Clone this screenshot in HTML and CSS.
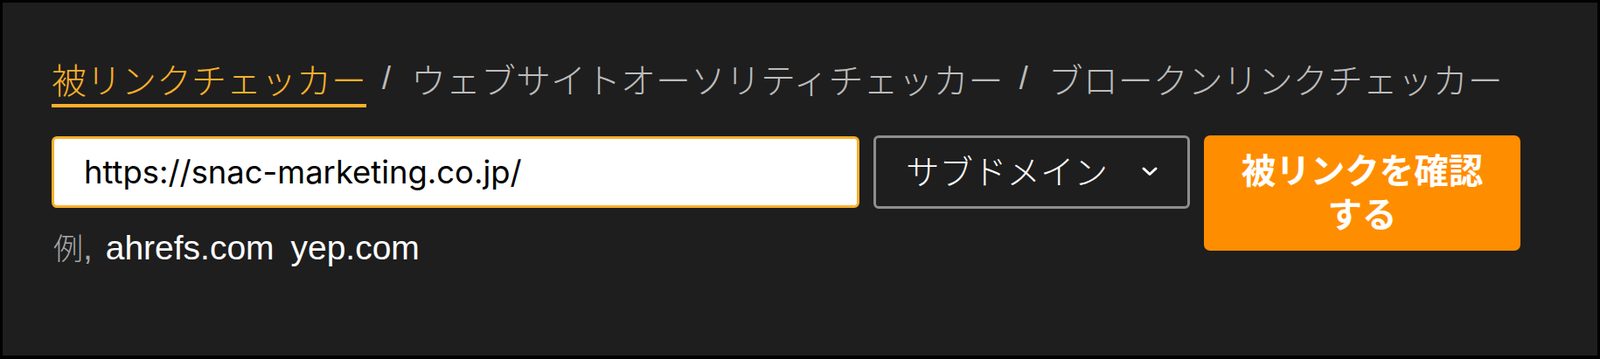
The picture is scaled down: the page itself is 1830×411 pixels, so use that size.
FILE: index.html
```html
<!DOCTYPE html>
<html lang="ja">
<head>
<meta charset="utf-8">
<title>被リンクチェッカー</title>
<link rel="stylesheet" href="styles.css">
</head>
<body>
<div class="frame">
  <section class="panel">
    <nav class="tabs">
      <a class="tab tab-active">被リンクチェッカー</a>
      <span class="sep">/</span>
      <a class="tab">ウェブサイトオーソリティチェッカー</a>
      <span class="sep">/</span>
      <a class="tab">ブロークンリンクチェッカー</a>
    </nav>
    <form class="form-row">
      <div class="field-col">
        <div class="url-box">
          <input class="url-input" type="text" value="https://snac-marketing.co.jp/">
        </div>
        <p class="examples"><span class="ex-label">例</span><span class="ex-comma">,</span> <span class="ex-link">ahrefs.com</span> <span class="ex-link">yep.com</span></p>
      </div>
      <div class="select-box">
        <span class="select-text">サブドメイン</span>
        <svg class="chevron" width="20" height="12" viewBox="0 0 20 12" aria-hidden="true">
          <polyline points="3,3 10,9.5 17,3" fill="none" stroke="#ffffff" stroke-width="3" stroke-linecap="round" stroke-linejoin="round"/>
        </svg>
      </div>
      <button class="submit-btn" type="button">被リンクを確認する</button>
    </form>
  </section>
</div>
</body>
</html>
```

FILE: styles.css
```css
* { box-sizing: border-box; }

html, body {
  margin: 0;
  padding: 0;
  background: #000000;
}

.frame {
  width: 1830px;
  height: 411px;
  padding: 3px 3px 4px 3px;
  background: #000000;
}

.panel {
  height: 100%;
  background: #1e1e1e;
  padding: 67px 0 0 56px;
  font-family: "Noto Sans CJK JP", "Liberation Sans", sans-serif;
}

.tabs {
  display: flex;
  align-items: flex-start;
  font-size: 40px;
  line-height: 40px;
  font-weight: 300;
  white-space: nowrap;
}

.tab {
  color: #bcbcbc;
  display: block;
}

.tab-active {
  color: #fbb02a;
  padding: 0 0 9px 0;
  border-bottom: 4px solid #fbb02a;
}

.sep {
  font-family: "Liberation Sans", sans-serif;
  font-size: 36px;
  line-height: 40px;
  color: #bcbcbc;
  margin: 0 23px 0 18px;
}

.form-row {
  display: flex;
  align-items: flex-start;
  gap: 16px;
  margin: 32px 0 0 0;
}

.field-col {
  width: 924px;
}

.url-box {
  height: 82px;
  border: 3px solid #fbb02a;
  border-radius: 6px;
  background: #ffffff;
  display: flex;
  align-items: center;
  margin-top: 1px;
}

.url-input {
  width: 100%;
  border: 0;
  outline: none;
  background: transparent;
  padding: 0 0 0 34px;
  font-family: "Inter", "Liberation Sans", sans-serif;
  font-size: 36.4px;
  color: #000000;
}

.examples {
  margin: 24px 0 0 0;
  font-family: "Liberation Sans", sans-serif;
  font-size: 39px;
  line-height: 44px;
  height: 44px;
  color: #ffffff;
}

.ex-label {
  font-family: "Noto Sans CJK JP", sans-serif;
  font-weight: 300;
  font-size: 34px;
  line-height: 1px;
  color: #a8a8a8;
  margin-left: 2px;
}

.ex-comma {
  color: #a8a8a8;
  margin-right: 4px;
}

.ex-link {
  margin-right: 8px;
}

.select-box {
  width: 362px;
  height: 84px;
  border: 3px solid #8e8e8e;
  border-radius: 6px;
  display: flex;
  align-items: center;
  justify-content: space-between;
  padding: 0 33px 0 34px;
  color: #ffffff;
}

.select-text {
  font-size: 38.5px;
  font-weight: 300;
  line-height: 40px;
  margin-top: -6px;
}

.chevron {
  display: block;
  margin-top: -2px;
}

.submit-btn {
  width: 362px;
  height: 132px;
  border: 0;
  border-radius: 7px;
  background: #ff8d00;
  color: #ffffff;
  font-family: "Noto Sans CJK JP", sans-serif;
  font-weight: 700;
  font-size: 39.5px;
  line-height: 50px;
  padding: 13px 40px 19px 40px;
  text-align: center;
}
```
